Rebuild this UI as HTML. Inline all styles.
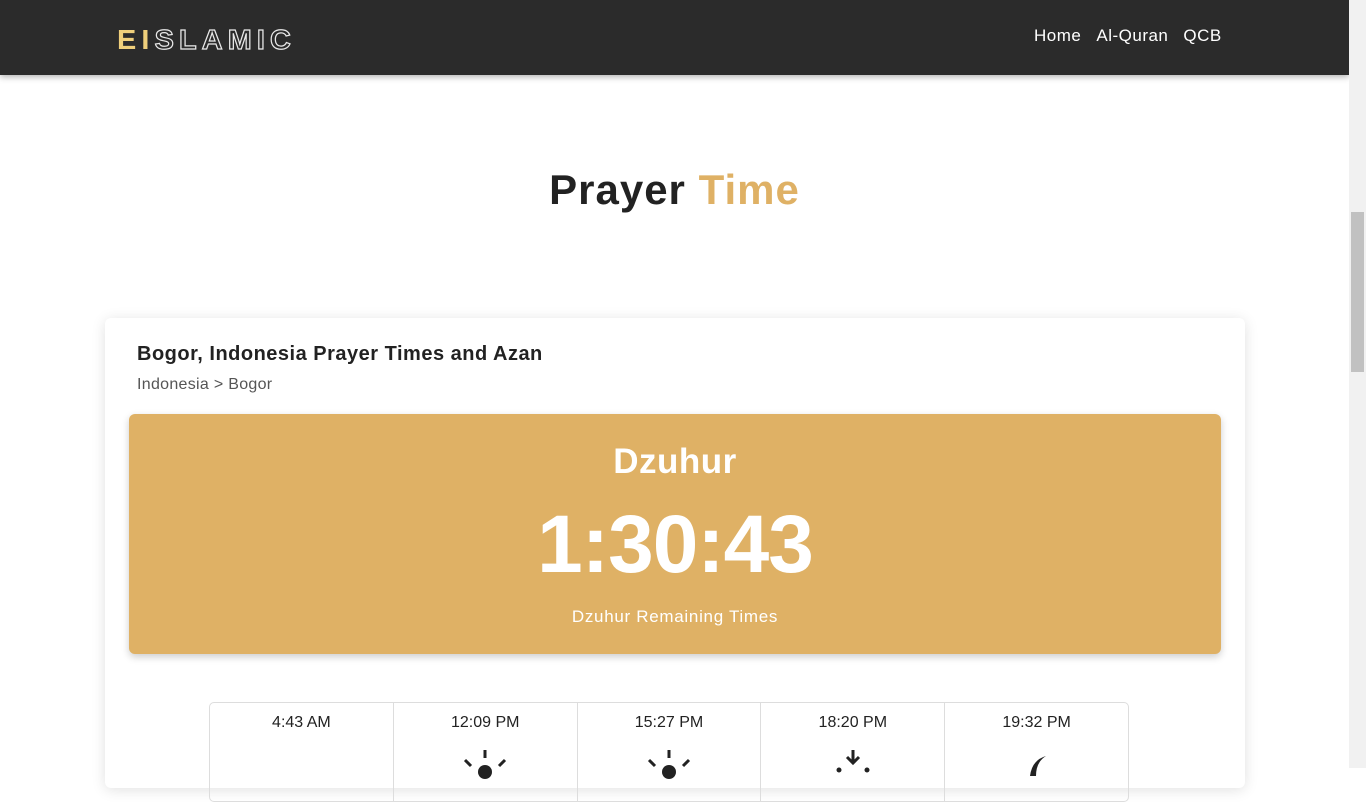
<!DOCTYPE html>
<html><head><style>
*{margin:0;padding:0;box-sizing:border-box}
body{width:1366px;height:768px;overflow:hidden;background:#fff;font-family:"Liberation Sans",sans-serif;position:relative}
.nav{position:absolute;left:0;top:0;width:1349px;height:75px;background:#2b2b2b;box-shadow:0 2px 6px rgba(0,0,0,.3)}
.logo{position:absolute;left:117px;top:25px;font-size:28px;font-weight:bold;letter-spacing:5px;line-height:30px;transform:scaleX(1.03);transform-origin:left}
.logo .f{color:#efcf7b}
.logo .o{color:transparent;-webkit-text-stroke:1.2px #e8e8e8}
.links{position:absolute;top:26px;left:1034px;color:#fff;font-size:17px;letter-spacing:0.5px}
.links span{margin-right:15px}
.sb{position:absolute;right:0;top:0;width:17px;height:768px;background:#f1f1f1}
.sb div{position:absolute;left:2px;top:212px;width:13px;height:160px;background:#c1c1c1}
h1{position:absolute;left:0;width:1349px;top:166px;text-align:center;font-size:42px;letter-spacing:1px;color:#222;font-weight:bold}
h1 span{color:#dfb165}
.card{position:absolute;left:105px;top:318px;width:1140px;height:470px;background:#fff;border-radius:6px;box-shadow:0 2px 14px rgba(0,0,0,.12)}
.card h2{position:absolute;left:32px;top:25px;font-size:20px;letter-spacing:0.5px;color:#222}
.card .bc{position:absolute;left:32px;top:58px;font-size:16px;letter-spacing:0.3px;color:#555}
.gold{position:absolute;left:24px;top:96px;width:1092px;height:240px;background:#dfb165;border-radius:6px;box-shadow:0 3px 8px rgba(0,0,0,.2);color:#fff;text-align:center}
.gold .n{position:absolute;width:100%;top:28px;font-size:35px;font-weight:bold;letter-spacing:0.5px}
.gold .t{position:absolute;width:100%;top:84px;font-size:82px;font-weight:bold;letter-spacing:-1px}
.gold .r{position:absolute;width:100%;top:193px;font-size:17px;letter-spacing:0.7px}
.tbl{position:absolute;left:104px;top:384px;width:920px;height:100px;border:1px solid #ddd;border-radius:5px;display:flex}
.tbl div{flex:1;border-right:1px solid #ddd;text-align:center;padding-top:11px;font-size:16px;color:#222}
.tbl div:last-child{border-right:none}
.tbl svg{display:block;margin:18px auto 0}
</style></head><body>
<div class="nav">
<div class="logo"><span class="f">EI</span><span class="o">SLAMIC</span></div>
<div class="links"><span>Home</span><span>Al-Quran</span><span>QCB</span></div>
</div>
<h1>Prayer <span>Time</span></h1>
<div class="card">
<h2>Bogor, Indonesia Prayer Times and Azan</h2>
<div class="bc">Indonesia &gt; Bogor</div>
<div class="gold"><div class="n">Dzuhur</div><div class="t">1:30:43</div><div class="r">Dzuhur Remaining Times</div></div>
<div class="tbl">
<div>4:43 AM</div>
<div>12:09 PM<svg width="46" height="30"><g stroke="#222" stroke-width="3" fill="none"><line x1="23" y1="0" x2="23" y2="8"/><line x1="3" y1="10" x2="9" y2="16"/><line x1="43" y1="10" x2="37" y2="16"/></g><circle cx="23" cy="22" r="7" fill="#222"/></svg></div>
<div>15:27 PM<svg width="46" height="30"><g stroke="#222" stroke-width="3" fill="none"><line x1="23" y1="0" x2="23" y2="8"/><line x1="3" y1="10" x2="9" y2="16"/><line x1="43" y1="10" x2="37" y2="16"/></g><circle cx="23" cy="22" r="7" fill="#222"/></svg></div>
<div>18:20 PM<svg width="46" height="30"><g stroke="#222" stroke-width="3" fill="none"><line x1="23" y1="0" x2="23" y2="12"/><polyline points="17,7 23,13 29,7"/></g><circle cx="9" cy="20" r="2.5" fill="#222"/><circle cx="37" cy="20" r="2.5" fill="#222"/></svg></div>
<div>19:32 PM<svg width="46" height="30"><path d="M32 6 Q18 10 16 26 L22 26 Q22 12 32 6Z" fill="#222"/></svg></div>
</div>
</div>
<div class="sb"><div></div></div>
</body></html>
